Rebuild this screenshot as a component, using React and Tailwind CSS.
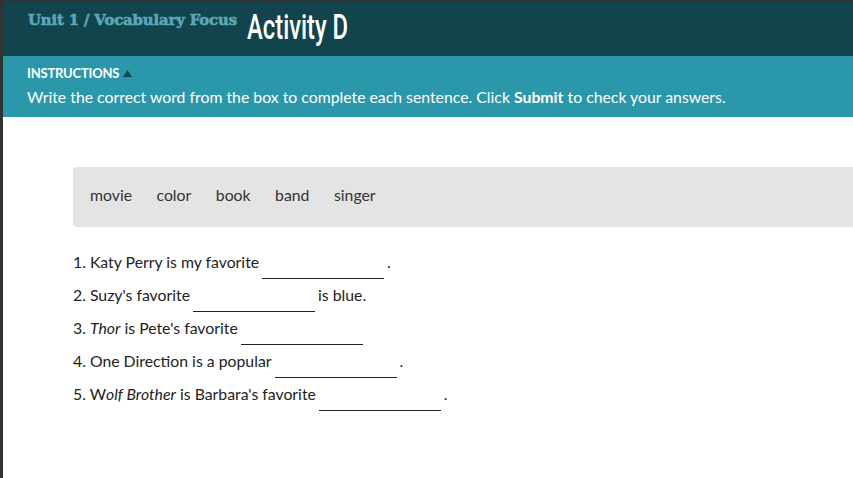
export default function App() {
  const lato = { fontFamily: "Lato, 'Open Sans', sans-serif" };
  const Blank = () => (
    <span className="inline-block w-[122px] h-[22px] border-b border-[#222] align-[-11px] mx-[3px]"></span>
  );
  const rows = [
    <>1. Katy Perry is my favorite<Blank />.</>,
    <>2. Suzy's favorite<Blank />is blue.</>,
    <>3. <i>Thor</i> is Pete's favorite<Blank /></>,
    <>4. One Direction is a popular<Blank />.</>,
    <>5. W<i>olf Brother</i> is Barbara's favorite<Blank />.</>,
  ];
  return (
    <div className="w-[853px] h-[478px] overflow-hidden bg-[#333] pt-[2px] pl-[3px]" style={lato}>
      <div className="h-[476px] bg-white flex flex-col">
        <div className="h-[54px] bg-[#12444e] flex items-start pl-[25px] pt-[8px] gap-[10px]">
          <span
            className="text-[14.8px] font-black text-[#5aa7b6] leading-none mt-[3px] tracking-[-0.1px] [-webkit-text-stroke:0.6px_#5aa7b6]"
            style={{ fontFamily: "'DejaVu Serif', 'Liberation Serif', serif" }}
          >
            Unit 1 / Vocabulary Focus
          </span>
          <span
            className="text-[35px] text-white leading-none font-medium origin-left scale-x-[0.68] inline-block"
            style={{ fontFamily: "Roboto, sans-serif" }}
          >
            Activity D
          </span>
        </div>
        <div className="h-[61px] bg-[#2a97ab] pl-[24px] pt-[9px] text-white">
          <div className="flex items-center gap-[4px] text-[13px] font-bold leading-[16px] tracking-[-0.2px]">
            INSTRUCTIONS
            <svg width="9" height="7" viewBox="0 0 9 7" className="mt-[1px]">
              <polygon points="0,7 4.5,0 9,7" fill="#12444e" />
            </svg>
          </div>
          <div className="text-[15.8px] leading-[20px] mt-[6px]">
            Write the correct word from the box to complete each sentence. Click <b>Submit</b> to check your answers.
          </div>
        </div>
        <div className="ml-[70px] mr-[-10px] mt-[50px] h-[60px] bg-[#e4e4e4] rounded-[4px] flex items-center pl-[17px] pb-[4px] gap-[24.5px] text-[15.8px] text-[#333]">
          <span>movie</span>
          <span>color</span>
          <span>book</span>
          <span>band</span>
          <span>singer</span>
        </div>
        <div className="ml-[70px] mt-[25px] text-[15.8px] text-[#222] flex flex-col">
          {rows.map((r, i) => (
            <div key={i} className="h-[33px] leading-[20px]">{r}</div>
          ))}
        </div>
      </div>
    </div>
  );
}
